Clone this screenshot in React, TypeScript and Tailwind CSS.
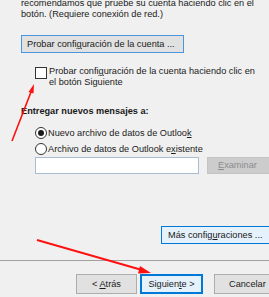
import React from "react";

export default function App() {
  return (
    <div
      className="relative w-[269px] h-[297px] overflow-hidden bg-[#f0f0f0] text-[9.2px] leading-[11px] text-[#1a1a1a] whitespace-nowrap"
      style={{ fontFamily: '"Liberation Sans", Arial, sans-serif' }}
    >
      <div className="pl-[21px] mt-[-2px]">
        <p>recomendamos que pruebe su cuenta haciendo clic en el</p>
        <p>botón. (Requiere conexión de red.)</p>
      </div>

      <div className="pl-[21px] mt-[15px]">
        <button className="w-[163px] h-[18px] border border-[#4c94dc] bg-[#e1e1e1] text-left pl-[5px] leading-[16px]">
          Probar confi<span className="underline">g</span>uración de la cuenta ...
        </button>
      </div>

      <div className="flex pl-[35px] mt-[13px] gap-[2px]">
        <span className="mt-[1px] w-[12px] h-[12px] shrink-0 border border-[#333] bg-white" />
        <p>
          Probar confi<span className="underline">g</span>uración de la cuenta haciendo clic en
          <br />
          el botón Siguiente
        </p>
      </div>

      <p className="pl-[21px] mt-[18px] font-bold">Entregar nuevos mensajes a:</p>

      <div className="pl-[35px] mt-[10px] flex flex-col gap-[4px]">
        <div className="flex items-center gap-[1px]">
          <span className="w-[12px] h-[12px] rounded-full border border-[#333] bg-white flex items-center justify-center">
            <span className="w-[6px] h-[6px] rounded-full bg-[#1a1a1a]" />
          </span>
          <span>
            Nuevo archivo de datos de Outloo<span className="underline">k</span>
          </span>
        </div>
        <div className="flex items-center gap-[1px]">
          <span className="w-[12px] h-[12px] rounded-full border border-[#333] bg-white" />
          <span>
            Archivo de datos de Outlook e<span className="underline">x</span>istente
          </span>
        </div>
      </div>

      <div className="flex pl-[35px] mt-[2px] gap-[8px]">
        <div className="w-[164px] h-[17px] shrink-0 border border-[#a8bdd2] bg-white" />
        <button className="w-[70px] h-[17px] shrink-0 border border-[#c4c4c4] bg-[#cccccc] text-[#8c8c8c] text-left pl-[10px] leading-[15px]">
          <span className="underline">E</span>xaminar
        </button>
      </div>

      <div className="flex justify-end mt-[52px] mr-[-20px]">
        <button className="w-[128px] h-[18px] shrink-0 border border-[#0078d7] bg-[#e5f1fb] text-left pl-[6px] leading-[16px]">
          Más config<span className="underline">u</span>raciones ...
        </button>
      </div>

      <div className="mt-[16px] h-[2px] border-t border-[#a0a0a0] border-b-white" />

      <div className="flex mt-[12px] pl-[76px] gap-[3px]">
        <button className="w-[61px] h-[20px] shrink-0 border border-[#adadad] bg-[#e1e1e1] leading-[18px]">
          &lt; <span className="underline">A</span>trás
        </button>
        <button className="w-[63px] h-[20px] shrink-0 border-2 border-[#0078d7] bg-[#e5f1fb] leading-[16px]">
          Siguien<span className="underline">t</span>e &gt;
        </button>
        <button className="ml-[8px] w-[62px] h-[20px] shrink-0 border border-[#adadad] bg-[#e1e1e1] leading-[18px] text-left pl-[14px]">
          Cancelar
        </button>
      </div>

      <svg className="absolute inset-0 pointer-events-none" width="269" height="297" viewBox="0 0 269 297">
        <line x1="12" y1="141" x2="31" y2="92" stroke="#ff1010" strokeWidth="1.6" />
        <polygon points="34,84 28.5,92 33.5,93.5" fill="#ff1010" />
        <line x1="37" y1="240" x2="142" y2="270" stroke="#ff1010" strokeWidth="2" />
        <polygon points="151,273 140,266 138,273.5" fill="#ff1010" />
      </svg>
    </div>
  );
}
